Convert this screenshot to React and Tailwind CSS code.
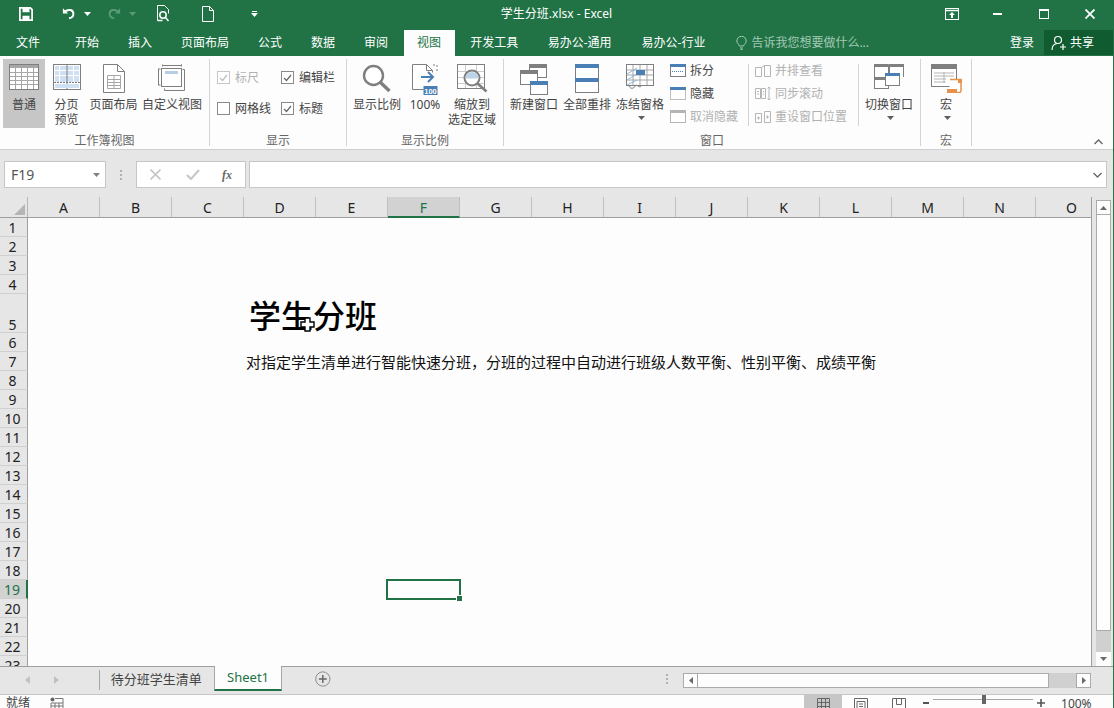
import React from 'react';

const FONT = { fontFamily: '"Noto Sans","Noto Sans CJK SC",sans-serif' };
const GREY = '#7f7f7f';
const BLUE = '#4a7fb5';

const Caret = ({ c = '#5f5f5f' }) => (
  <svg width="7" height="4" viewBox="0 0 7 4"><path d="M0 0h7L3.5 4z" fill={c} /></svg>
);

/* ---------- title bar icons ---------- */
const SaveIcon = () => (
  <svg width="14" height="14" viewBox="0 0 16 16">
    <path d="M1 1h12l2 2v12H1z" fill="none" stroke="#fff" strokeWidth="2" />
    <rect x="4" y="1" width="8" height="5" fill="#fff" />
    <rect x="4" y="10" width="8" height="5" fill="#fff" />
  </svg>
);
const UndoIcon = ({ c = '#fff' }) => (
  <svg width="14" height="13" viewBox="0 0 16 14">
    <path d="M3 5c4-3.500 10-2.500 10 2.500 0 3-2.500 4.500-5 5" fill="none" stroke={c} strokeWidth="2.200" />
    <path d="M1 1v6h6z" fill={c} />
  </svg>
);
const PreviewIcon = () => (
  <svg width="15" height="17" viewBox="0 0 15 17">
    <path d="M1.500 15.500V.5h7l4 4v4" fill="none" stroke="#fff" />
    <circle cx="7" cy="10" r="3.200" fill="none" stroke="#fff" strokeWidth="1.500" />
    <path d="M9.500 12.500l3 3.500M1.500 15.500h5" stroke="#fff" strokeWidth="1.500" />
  </svg>
);
const DocIcon = () => (
  <svg width="12" height="16" viewBox="0 0 12 16">
    <path d="M.5.5h7l4 4v11H.5zM7.500.5v4h4" fill="none" stroke="#fff" />
  </svg>
);
const RestoreRibbon = () => (
  <svg width="14" height="12" viewBox="0 0 14 12">
    <rect x=".5" y=".5" width="13" height="11" fill="none" stroke="#fff" />
    <path d="M.5 2.500h13" stroke="#fff" strokeWidth="1.500" />
    <path d="M7 4l3 3H8v3H6V7H4z" fill="#fff" />
  </svg>
);

/* ---------- ribbon big icons ---------- */
const NormalIcon = () => (
  <svg width="30" height="26" viewBox="0 0 30 26">
    <rect x=".5" y=".5" width="29" height="25" fill="#fff" stroke={GREY} />
    <rect x="1" y="1" width="28" height="3" fill="#a6a6a6" />
    <path d="M1 8.500h28M1 12.500h28M1 16.500h28M1 20.500h28M6.500 1v24M12.500 1v24M18.500 1v24M24.500 1v24" stroke="#a6a6a6" />
  </svg>
);
const PageBreakIcon = () => (
  <svg width="28" height="26" viewBox="0 0 28 26">
    <rect x=".5" y=".5" width="27" height="25" fill="#fff" stroke={GREY} />
    <rect x="2" y="2" width="24" height="16" fill="#cfe0f3" />
    <path d="M1 6.500h26M1 11.500h26M6.500 1v24M20.500 1v24" stroke="#fff" />
    <path d="M14 1v24" stroke={GREY} />
    <path d="M1 18.500h26" stroke={GREY} strokeDasharray="2 1" />
    <rect x="2" y="20" width="24" height="4" fill="#cfe0f3" />
  </svg>
);
const PageLayoutIcon = () => (
  <svg width="22" height="29" viewBox="0 0 22 29">
    <path d="M.5.5h14l7 7v21H.5zM14.500.5v7h7" fill="#fff" stroke={GREY} />
    <path d="M4.500 11.500h13v13h-13zM4.500 15.500h13M4.500 18.500h13M4.500 21.500h13M11 11.500v13" fill="none" stroke="#a6a6a6" />
  </svg>
);
const CustomViewIcon = () => (
  <svg width="28" height="28" viewBox="0 0 28 28">
    <path d="M4.500 1.500h19v-1M4.500 .5v2M23.500 .5v2" fill="none" stroke={GREY} />
    <path d="M.5 5v16M2.500 5h-4M2.500 21h-4" stroke={GREY} />
    <rect x="3.500" y="4.500" width="20" height="18" fill="#fff" stroke={GREY} />
    <rect x="7" y="7" width="13" height="3" fill="#b7cde4" />
    <path d="M6.500 24.500v2h20v-21h-2" fill="none" stroke={GREY} />
  </svg>
);
const MagnifyIcon = () => (
  <svg width="30" height="28" viewBox="0 0 30 28">
    <circle cx="11.500" cy="11.500" r="9.500" fill="#fff" stroke={GREY} strokeWidth="2.400" />
    <path d="M18.500 18.500l9 8.500" stroke={GREY} strokeWidth="3.400" />
  </svg>
);
const HundredIcon = () => (
  <svg width="27" height="31" viewBox="0 0 27 31">
    <path d="M.5.5h14l6 6v2M.5.5v25h11" fill="#fff" stroke={GREY} />
    <path d="M14.500.5v6h6" fill="none" stroke={GREY} />
    <path d="M21 1h4v8" fill="none" stroke={GREY} strokeDasharray="2 2" />
    <path d="M9 13h11M16 8l5 5-5 5" fill="none" stroke={BLUE} strokeWidth="2" />
    <rect x="11.500" y="22" width="14" height="9" fill={BLUE} />
    <text x="18.500" y="29.500" fontSize="7.500" fill="#fff" textAnchor="middle" fontWeight="700" fontFamily="Liberation Sans,sans-serif">100</text>
  </svg>
);
const ZoomSelIcon = () => (
  <svg width="31" height="29" viewBox="0 0 31 29">
    <rect x=".5" y=".5" width="27" height="24" fill="#fff" stroke={GREY} />
    <path d="M1 7.500h26M1 13.500h26M1 19.500h26M8.500 1v23M19.500 1v23" stroke="#cdcdcd" />
    <circle cx="15" cy="14" r="7.500" fill="#fff" stroke={GREY} strokeWidth="2" />
    <path d="M8.500 14.500a6.500 6.500 0 0 1 13 0z" fill="#bcd2e8" />
    <path d="M20.500 19.500l9 8" stroke={GREY} strokeWidth="2.600" />
  </svg>
);
const NewWinIcon = () => (
  <svg width="28" height="31" viewBox="0 0 28 31">
    <rect x="9.500" y=".5" width="17" height="13" fill="#fff" stroke={GREY} />
    <rect x="9" y="0" width="18" height="4" fill={GREY} />
    <rect x=".5" y="6.500" width="17" height="14" fill="#fff" stroke={GREY} />
    <rect x="0" y="6" width="18" height="4" fill={GREY} />
    <rect x="10.500" y="17.500" width="17" height="13" fill="#fff" stroke={GREY} />
    <rect x="10" y="17" width="18" height="4" fill={BLUE} />
  </svg>
);
const ArrangeIcon = () => (
  <svg width="24" height="29" viewBox="0 0 24 29">
    <rect x=".5" y=".5" width="23" height="28" fill="#fff" stroke={GREY} />
    <rect x="0" y="0" width="24" height="4" fill={BLUE} />
    <rect x="0" y="14" width="24" height="4" fill={BLUE} />
  </svg>
);
const FreezeIcon = () => (
  <svg width="28" height="25" viewBox="0 0 28 25">
    <rect x=".5" y=".5" width="27" height="21" fill="#fff" stroke={GREY} />
    <path d="M1 6h26M1 11h26M1 16h26M7 1v20M14 1v20M21 1v20" stroke="#a6a6a6" />
    <path d="M1 10l10-6M1 16l10-6M1 21l10-5" stroke="#8fb7dc" />
    <rect x="10" y="6" width="9" height="5" fill={BLUE} />
    <path d="M3 22c1 3 5 3 6 0s5 3 6 0" fill="none" stroke={GREY} />
  </svg>
);
const SwitchWinIcon = () => (
  <svg width="30" height="25" viewBox="0 0 30 25">
    <path d="M.5 13V.5h14V13M15.500 13V.5h14V13" fill="#fff" stroke={GREY} />
    <rect x="0" y="0" width="14" height="3" fill={GREY} />
    <rect x="15" y="0" width="15" height="3" fill={GREY} />
    <rect x=".5" y="13.500" width="14" height="11" fill="#fff" stroke={GREY} />
    <rect x="0" y="13" width="15" height="3" fill={GREY} />
    <rect x="11.500" y="9.500" width="14" height="12" fill="#fff" stroke={GREY} />
    <rect x="11" y="9" width="15" height="3" fill={BLUE} />
  </svg>
);
const MacroIcon = () => (
  <svg width="31" height="29" viewBox="0 0 31 29">
    <rect x=".5" y=".5" width="25" height="22" fill="#fff" stroke={GREY} />
    <rect x="0" y="0" width="26" height="5" fill={GREY} />
    <path d="M3 9h20M3 12h20M3 15h12M3 18h12M13 8v11" stroke="#b5b5b5" />
    <path d="M19 15.500h11v11c0 1-1 2-2 2H18" fill="#fff" stroke="#e8914a" strokeWidth="1.500" />
    <rect x="16" y="25" width="10" height="4" fill="#e8914a" />
    <rect x="27" y="15" width="4" height="4" fill="#e8914a" />
  </svg>
);

/* ---------- ribbon small icons ---------- */
const SplitIcon = () => (
  <svg width="16" height="13" viewBox="0 0 16 13">
    <rect x=".5" y=".5" width="15" height="12" fill="#fff" stroke={GREY} />
    <rect x="0" y="0" width="16" height="3" fill={BLUE} />
    <path d="M2 7.500h12" stroke={BLUE} strokeDasharray="1 1" />
  </svg>
);
const HideIcon = () => (
  <svg width="16" height="13" viewBox="0 0 16 13">
    <rect x=".5" y=".5" width="15" height="12" fill="#fff" stroke={GREY} strokeDasharray="1 1" />
    <rect x="0" y="0" width="16" height="3" fill={BLUE} />
  </svg>
);
const UnhideIcon = () => (
  <svg width="16" height="13" viewBox="0 0 16 13">
    <rect x=".5" y=".5" width="15" height="12" fill="#fff" stroke="#b5b5b5" />
    <rect x="0" y="0" width="16" height="3" fill="#b5b5b5" />
  </svg>
);
const BookIcon = () => (
  <svg width="16" height="12" viewBox="0 0 16 12">
    <path d="M.5 2.500h6v9h-6zM9.500 .5h6v11h-6zM6.500 2.500l3-2" fill="none" stroke="#b5b5b5" />
  </svg>
);
const SyncIcon = () => (
  <svg width="16" height="15" viewBox="0 0 16 15">
    <path d="M.5 2.500h5v10h-5zM6.500 2.500h4v10h-4zM2 5.500h2M2 8h2M8 5.500h1M8 8h1" fill="none" stroke="#b5b5b5" />
    <path d="M14 1v13M12.500 2.500L14 1l1.500 1.500M12.500 12.500L14 14l1.500-1.500" fill="none" stroke="#b5b5b5" />
  </svg>
);
const ResetIcon = () => (
  <svg width="16" height="12" viewBox="0 0 16 12">
    <path d="M.5 2.500h6v9h-6zM9.500 .5h6v11h-6zM2 7h3M3.500 5.500v3M11 6h3M12.500 4.500v3" fill="none" stroke="#b5b5b5" />
  </svg>
);

/* ---------- ribbon parts ---------- */
const BigBtn = ({ icon, label, w, active, caret }) => (
  <div className={`flex flex-col items-center pt-[5px] shrink-0 h-[69px] ${w} ${active ? 'bg-[#c6c6c6]' : ''}`}>
    <div className="h-[33px] flex items-start justify-center">{icon}</div>
    <div className="text-[12px] leading-[15px] text-[#444] text-center whitespace-pre-line">{label}</div>
    {caret && <div className="mt-[4px] ml-[3px] leading-none flex"><Caret /></div>}
  </div>
);

const Group = ({ w, label, children }) => (
  <div className={`flex flex-col shrink-0 h-[87px] border-r border-[#d4d4d4] ${w}`}>
    <div className="flex h-[75px] shrink-0">{children}</div>
    <div className="text-[12px] leading-[14px] text-center text-[#666]">{label}</div>
  </div>
);

const Check = ({ label, checked, disabled }) => (
  <div className="flex items-center h-[31px]">
    <span className={`w-[13px] h-[13px] border flex items-center justify-center bg-white ${disabled ? 'border-[#c6c6c6]' : 'border-[#8a8a8a]'}`}>
      {checked && (
        <svg width="9" height="8" viewBox="0 0 9 8"><path d="M1 4l2.500 2.500L8 1" fill="none" stroke={disabled ? '#bdbdbd' : '#666'} strokeWidth="1.200" /></svg>
      )}
    </span>
    <span className={`ml-[5px] text-[12px] leading-[15px] ${disabled ? 'text-[#b1b1b1]' : 'text-[#444]'}`}>{label}</span>
  </div>
);

const SmallBtn = ({ icon, label, disabled }) => (
  <div className="flex items-center h-[23px]">
    <span className="w-[16px] flex justify-center">{icon}</span>
    <span className={`ml-[4px] text-[12px] leading-[15px] whitespace-nowrap ${disabled ? 'text-[#b1b1b1]' : 'text-[#444]'}`}>{label}</span>
  </div>
);

const Tab = ({ children, active, extra }) => (
  <div className={`h-[26px] flex items-center text-[12px] whitespace-nowrap ${active ? 'bg-[#fdfdfd] text-[#217346]' : 'text-white'} ${extra || 'px-[13.500px]'}`}>
    {children}
  </div>
);

const rows = Array.from({ length: 23 }, (_, i) => i + 1);
const cols = 'ABCDEFGHIJKLMNO'.split('');

export default function App() {
  return (
    <div className="w-[1114px] h-[708px] overflow-hidden flex flex-col bg-[#e6e6e6] text-[#222] border-r border-[#217346]" style={FONT}>
      {/* title bar */}
      <div className="h-[30px] shrink-0 pb-[3px] bg-[#217346] grid grid-cols-[1fr_auto_1fr] items-center text-white">
        <div className="flex items-center h-full">
          <span className="ml-[19px] flex"><SaveIcon /></span>
          <span className="ml-[29px] flex"><UndoIcon /></span>
          <span className="ml-[8px] flex"><Caret c="#fff" /></span>
          <span className="ml-[16px] flex scale-x-[-1]"><UndoIcon c="#5a9a78" /></span>
          <span className="ml-[8px] flex"><Caret c="#5a9a78" /></span>
          <span className="ml-[20px] flex"><PreviewIcon /></span>
          <span className="ml-[31px] flex"><DocIcon /></span>
          <span className="ml-[37px] flex flex-col items-center gap-[1px]">
            <span className="w-[5px] h-px bg-white" />
            <Caret c="#fff" />
          </span>
        </div>
        <div className="text-[12px] leading-none">学生分班.xlsx - Excel</div>
        <div className="flex items-center justify-end h-full">
          <span className="flex mr-[34px]"><RestoreRibbon /></span>
          <span className="w-[9px] h-[2px] bg-white mr-[37px]" />
          <span className="w-[10px] h-[10px] border border-white border-t-2 mr-[36px]" />
          <svg className="mr-[18px]" width="10" height="10" viewBox="0 0 10 10"><path d="M.5.5l9 9M9.500.5l-9 9" stroke="#fff" strokeWidth="1.800" /></svg>
        </div>
      </div>

      {/* tabs */}
      <div className="h-[26px] shrink-0 bg-[#217346] flex items-end pl-[2.500px] gap-[2px] relative">
        <Tab extra="px-[13.500px] mr-[6px]">文件</Tab>
        <Tab>开始</Tab>
        <Tab>插入</Tab>
        <Tab>页面布局</Tab>
        <Tab>公式</Tab>
        <Tab>数据</Tab>
        <Tab>审阅</Tab>
        <Tab active>视图</Tab>
        <Tab>开发工具</Tab>
        <Tab extra="px-[14px]">易办公-通用</Tab>
        <Tab extra="px-[14px]">易办公-行业</Tab>
        <div className="h-[26px] flex items-center ml-[15px] text-[12px] text-[#a3c9b4] whitespace-nowrap">
          <svg width="11" height="14" viewBox="0 0 11 14" className="mr-[4px]">
            <path d="M3.500 10C3 8 .8 7.500.8 5a4.700 4.700 0 0 1 9.400 0c0 2.500-2.200 3-2.700 5zM4 12h3M4.500 13.500h2" fill="none" stroke="#a3c9b4" />
          </svg>
          告诉我您想要做什么...
        </div>
        <div className="ml-auto h-[26px] flex items-center">
          <span className="text-[12px] text-white mr-[10px]">登录</span>
          <div className="w-[69px] h-[25px] mb-[1px] bg-[#105c30] flex items-center text-[12px] text-white">
            <svg width="16" height="16" viewBox="0 0 16 16" className="ml-[7px] mr-[3px]">
              <circle cx="7" cy="5" r="3.500" fill="none" stroke="#fff" strokeWidth="1.200" />
              <path d="M1 15c0-4 2-6 5-6.500M12 9v6M9 12h6" fill="none" stroke="#fff" strokeWidth="1.200" />
            </svg>
            共享
          </div>
        </div>
      </div>

      {/* ribbon */}
      <div className="h-[94px] shrink-0 bg-[#fdfdfd] border-b border-[#d0d0d0] pt-[3px] flex relative">
        <Group w="w-[210px]" label="工作簿视图">
          <div className="w-[3px] shrink-0" />
          <BigBtn w="w-[42px]" active icon={<NormalIcon />} label="普通" />
          <BigBtn w="w-[43px]" icon={<PageBreakIcon />} label={'分页\n预览'} />
          <BigBtn w="w-[51px]" icon={<PageLayoutIcon />} label="页面布局" />
          <BigBtn w="w-[66px]" icon={<CustomViewIcon />} label="自定义视图" />
        </Group>
        <Group w="w-[137px]" label="显示">
          <div className="pl-[7px] pt-[3px] flex flex-col">
            <Check label="标尺" checked disabled />
            <Check label="网格线" />
          </div>
          <div className="pl-[10px] pt-[3px] flex flex-col">
            <Check label="编辑栏" checked />
            <Check label="标题" checked />
          </div>
        </Group>
        <Group w="w-[157px]" label="显示比例">
          <div className="w-[5px] shrink-0" />
          <BigBtn w="w-[50px]" icon={<MagnifyIcon />} label="显示比例" />
          <BigBtn w="w-[46px]" icon={<HundredIcon />} label="100%" />
          <BigBtn w="w-[48px]" icon={<ZoomSelIcon />} label={'缩放到\n选定区域'} />
        </Group>
        <Group w="w-[417px]" label="窗口">
          <div className="w-[5px] shrink-0" />
          <BigBtn w="w-[50px]" icon={<NewWinIcon />} label="新建窗口" />
          <BigBtn w="w-[56px]" icon={<ArrangeIcon />} label="全部重排" />
          <BigBtn w="w-[50px]" icon={<FreezeIcon />} label="冻结窗格" caret />
          <div className="w-[83px] pl-[5px] flex flex-col shrink-0">
            <SmallBtn icon={<SplitIcon />} label="拆分" />
            <SmallBtn icon={<HideIcon />} label="隐藏" />
            <SmallBtn icon={<UnhideIcon />} label="取消隐藏" disabled />
          </div>
          <div className="w-[111px] h-[62px] mt-[5px] pl-[6px] border-l border-r border-[#d4d4d4] shrink-0">
            <div className="-mt-[5px]">
              <SmallBtn icon={<BookIcon />} label="并排查看" disabled />
              <SmallBtn icon={<SyncIcon />} label="同步滚动" disabled />
              <SmallBtn icon={<ResetIcon />} label="重设窗口位置" disabled />
            </div>
          </div>
          <BigBtn w="w-[60px]" icon={<SwitchWinIcon />} label="切换窗口" caret />
        </Group>
        <Group w="w-[51px]" label="宏">
          <BigBtn w="w-[50px]" icon={<MacroIcon />} label="宏" caret />
        </Group>
        <svg width="9" height="6" viewBox="0 0 9 6" className="absolute right-[10px] bottom-[4px]">
          <path d="M.5 5L4.500 1l4 4" fill="none" stroke="#666" strokeWidth="1.400" />
        </svg>
      </div>

      {/* formula bar */}
      <div className="h-[47px] shrink-0 flex pt-[11px] pl-[4px] bg-[#e6e6e6]">
        <div className="w-[102px] h-[27px] bg-white border border-[#c6c6c6] flex items-center justify-between pl-[6px] pr-[5px] text-[14px] text-[#555]">
          F19 <Caret c="#808080" />
        </div>
        <div className="w-[30px] h-[27px] flex flex-col items-center justify-center gap-[2px]">
          <span className="w-[2px] h-[2px] bg-[#b0b0b0]" />
          <span className="w-[2px] h-[2px] bg-[#b0b0b0]" />
          <span className="w-[2px] h-[2px] bg-[#b0b0b0]" />
        </div>
        <div className="w-[110px] h-[27px] bg-white border border-[#c6c6c6] flex items-center">
          <svg className="ml-[13px]" width="11" height="11" viewBox="0 0 11 11"><path d="M.5.5l10 10M10.500.5l-10 10" stroke="#c6c6c6" strokeWidth="1.600" /></svg>
          <svg className="ml-[25px]" width="14" height="11" viewBox="0 0 14 11"><path d="M1 6l4 4 8-9" fill="none" stroke="#c6c6c6" strokeWidth="2" /></svg>
          <span className="ml-[22px] text-[12px] leading-none italic font-bold text-[#666]" style={{ fontFamily: '"Liberation Serif",serif' }}>fx</span>
        </div>
        <div className="w-[858px] h-[27px] ml-[3px] bg-white border border-[#c6c6c6] flex items-center justify-end pr-[4px]">
          <svg width="9" height="6" viewBox="0 0 9 6"><path d="M.5 1l4 4 4-4" fill="none" stroke="#666" strokeWidth="1.300" /></svg>
        </div>
      </div>

      {/* sheet + vertical scrollbar */}
      <div className="h-[469px] shrink-0 flex">
        <div className="w-[1092px] shrink-0 border-r border-[#9f9f9f] overflow-hidden flex flex-col relative">
          <div className="h-[21px] shrink-0 flex border-b border-[#9f9f9f]">
            <div className="w-[28px] shrink-0 border-r border-[#b5b5b5] flex items-end justify-end p-[2px]">
              <svg width="11" height="11" viewBox="0 0 11 11"><path d="M11 0v11H0z" fill="#b5b5b5" /></svg>
            </div>
            {cols.map((c) => (
              <div
                key={c}
                className={`w-[72px] shrink-0 flex items-center justify-center pt-[2px] text-[14px] leading-none border-r border-[#c0c0c0] ${c === 'F' ? 'bg-[#d2d2d2] text-[#217346] h-[21px] border-b-2 border-b-[#217346]' : ''}`}
              >
                {c}
              </div>
            ))}
          </div>
          {rows.map((r) => (
            <div key={r} className={`flex shrink-0 ${r === 5 ? 'h-[39px]' : 'h-[19px]'}`}>
              <div
                className={`w-[28px] shrink-0 flex justify-center pr-[2px] text-[14px] border-b border-b-[#d0d0d0] ${r === 5 ? 'items-end leading-[15px]' : 'items-center leading-[19px]'} ${r === 19 ? 'bg-[#d2d2d2] text-[#217346] border-r-2 border-r-[#217346]' : 'border-r border-r-[#9f9f9f]'}`}
              >
                {r}
              </div>
              <div className="flex-1 bg-[#fdfdfd] min-w-0">
                {r === 5 && (
                  <div className="ml-[221px] mt-[2px] text-[32px] leading-[39px] font-medium text-black whitespace-nowrap">学生分班</div>
                )}
                {r === 7 && (
                  <div className="ml-[218px] mt-[1px] text-[15px] leading-[19px] text-[#111] whitespace-nowrap">
                    对指定学生清单进行智能快速分班，分班的过程中自动进行班级人数平衡、性别平衡、成绩平衡
                  </div>
                )}
                {r === 19 && (
                  <div className="ml-[358px] -mt-[1px] w-[75px] h-[21px] border-2 border-[#217346] relative">
                    <span className="absolute -right-[3px] -bottom-[3px] w-[5px] h-[5px] bg-[#217346] border-l border-t border-white box-content" />
                  </div>
                )}
              </div>
            </div>
          ))}
          {/* mouse pointer */}
          <svg width="15" height="15" viewBox="0 0 15 15" className="absolute left-[300px] top-[120px]">
            <path d="M5 1h5v4h4v5h-4v4H5v-4H1V5h4z" fill="#fff" stroke="#000" strokeWidth="1.400" />
          </svg>
        </div>
        <div className="flex-1 flex flex-col pl-[4px] pt-[3px]">
          <div className="w-[15px] h-[15px] bg-[#fdfdfd] border border-[#ababab] flex items-center justify-center">
            <svg width="7" height="4" viewBox="0 0 7 4"><path d="M0 4h7L3.500 0z" fill="#6a6a6a" /></svg>
          </div>
          <div className="w-[15px] h-[416px] bg-[#fdfdfd] border border-[#ababab] border-t-0" />
          <div className="w-[15px] h-[21px] bg-[#d0d0d0]" />
          <div className="w-[15px] h-[14px] bg-[#fdfdfd] flex items-center justify-center">
            <Caret c="#6a6a6a" />
          </div>
        </div>
      </div>

      {/* sheet tabs */}
      <div className="h-[28px] shrink-0 flex items-start border-t border-[#9f9f9f] pr-[22px] bg-[#e6e6e6]">
        <svg className="ml-[25px] mt-[9px]" width="5" height="8" viewBox="0 0 5 8"><path d="M5 0v8L0 4z" fill="#c0c0c0" /></svg>
        <svg className="ml-[24px] mt-[9px]" width="5" height="8" viewBox="0 0 5 8"><path d="M0 0v8l5-4z" fill="#c0c0c0" /></svg>
        <div className="ml-[40px] mt-[3px] w-px h-[20px] bg-[#a6a6a6]" />
        <div className="ml-[11px] mt-[3px] text-[13px] leading-[18px] text-[#444] whitespace-nowrap">待分班学生清单</div>
        <div className="ml-[12px] w-[70px] h-[25px] -mt-px pt-[1px] bg-[#fdfdfd] border border-[#a6a6a6] border-t-0 border-b-2 border-b-[#217346] flex items-center justify-center text-[13px] text-[#217346]">
          Sheet1
        </div>
        <svg className="ml-[33px] mt-[4px]" width="16" height="16" viewBox="0 0 16 16">
          <circle cx="8" cy="8" r="7.300" fill="none" stroke="#8a8a8a" />
          <path d="M8 4v8M4 8h8" stroke="#666" strokeWidth="1.500" />
        </svg>
        <div className="ml-[335px] mt-[7px] flex flex-col gap-[2px]">
          <span className="w-[2px] h-[2px] bg-[#b0b0b0]" />
          <span className="w-[2px] h-[2px] bg-[#b0b0b0]" />
          <span className="w-[2px] h-[2px] bg-[#b0b0b0]" />
        </div>
        <div className="ml-[15px] mt-[6px] flex h-[15px]">
          <div className="w-[15px] bg-[#fdfdfd] border border-[#ababab] flex items-center justify-center">
            <svg width="4" height="7" viewBox="0 0 4 7"><path d="M4 0v7L0 3.500z" fill="#6a6a6a" /></svg>
          </div>
          <div className="w-[351px] bg-[#fdfdfd] border-y border-r border-[#ababab]" />
          <div className="w-[27px] bg-[#d0d0d0]" />
          <div className="w-[15px] bg-[#fdfdfd] border border-[#ababab] flex items-center justify-center">
            <svg width="4" height="7" viewBox="0 0 4 7"><path d="M0 0v7l4-3.500z" fill="#6a6a6a" /></svg>
          </div>
        </div>
      </div>

      {/* status bar */}
      <div className="h-[14px] shrink-0 bg-[#fdfdfd] border-t border-[#c6c6c6] flex items-start overflow-hidden">
        <span className="ml-[6px] text-[12px] leading-[16px] text-[#444]">就绪</span>
        <svg className="ml-[20px] mt-[2px]" width="14" height="12" viewBox="0 0 14 12">
          <circle cx="2.500" cy="2.500" r="2" fill="#666" />
          <path d="M5 1.500h8v10H1V6M1 6h12M1 9h12M5 6v6M9 6v6" fill="none" stroke="#777" />
        </svg>
        <div className="ml-[740px] w-[38px] h-[14px] bg-[#c6c6c6] flex justify-center items-start pt-[3px]">
          <svg width="13" height="12" viewBox="0 0 13 12"><path d="M.5 12V.5h12V12M.5 4.500h12M.5 8.500h12M4.500 .5V12M8.500 .5V12" fill="none" stroke="#666" /></svg>
        </div>
        <svg className="ml-[12px] mt-[3px]" width="14" height="12" viewBox="0 0 14 12"><path d="M.5 12V.5h13V12M3 3.500h8v9H3zM5 6h4M5 8.500h4" fill="none" stroke="#666" /></svg>
        <svg className="ml-[24px] mt-[3px]" width="14" height="12" viewBox="0 0 14 12"><path d="M.5 12V.5h13V12M4.500 .5v6h5v-6" fill="none" stroke="#666" /></svg>
        <span className="ml-[17px] mt-[7px] w-[6px] h-[2px] bg-[#555]" />
        <div className="ml-[4px] w-[100px] h-[14px] relative">
          <span className="absolute left-0 right-0 top-[4px] h-px bg-[#a6a6a6]" />
          <span className="absolute left-[49px] top-0 w-[4px] h-[9px] bg-[#666]" />
        </div>
        <svg className="ml-[4px] mt-[4px]" width="8" height="8" viewBox="0 0 8 8"><path d="M4 0v8M0 4h8" stroke="#555" strokeWidth="1.600" /></svg>
        <span className="ml-[16px] mt-[1px] text-[12px] leading-[15px] text-[#444]">100%</span>
      </div>
    </div>
  );
}
